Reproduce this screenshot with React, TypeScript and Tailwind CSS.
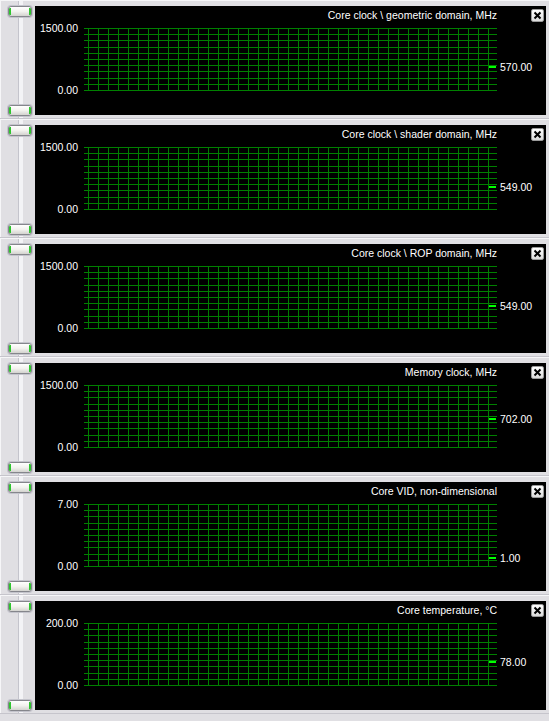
import React from "react";

type Row = { title: string; maxLabel: string; max: number; value: number; valueLabel: string };

const rows: Row[] = [
  { title: "Core clock \\ geometric domain, MHz", maxLabel: "1500.00", max: 1500, value: 570, valueLabel: "570.00" },
  { title: "Core clock \\ shader domain, MHz", maxLabel: "1500.00", max: 1500, value: 549, valueLabel: "549.00" },
  { title: "Core clock \\ ROP domain, MHz", maxLabel: "1500.00", max: 1500, value: 549, valueLabel: "549.00" },
  { title: "Memory clock, MHz", maxLabel: "1500.00", max: 1500, value: 702, valueLabel: "702.00" },
  { title: "Core VID, non-dimensional", maxLabel: "7.00", max: 7, value: 1, valueLabel: "1.00" },
  { title: "Core temperature, °C", maxLabel: "200.00", max: 200, value: 78, valueLabel: "78.00" },
];

const H = 62;
const hLines = Array.from({ length: 11 }, (_, i) => Math.round(i * 6.2) + 0.5);
const vLines = Array.from({ length: 41 }, (_, i) => 4.5 + i * 10);

function Thumb() {
  return (
    <div className="relative ml-[7px] h-[11px] w-[24px] rounded-[3px] border border-[#85868c] bg-linear-to-b from-white via-[#f2f2ee] to-[#d3d3cf] shadow-[0_0_0_1px_#c4c4cc]">
      <div className="absolute left-0 top-[1px] bottom-[1px] w-[2px] rounded-l-[1px] bg-[#2fc42f]" />
      <div className="absolute right-0 top-[1px] bottom-[1px] w-[2px] rounded-r-[1px] bg-[#2fc42f]" />
    </div>
  );
}

function CloseBtn() {
  return (
    <div className="flex h-[13px] w-[13px] items-center justify-center rounded-[2px] border border-[#9a9a9a] bg-linear-to-b from-white to-[#dcdcdc]">
      <svg width="9" height="9" viewBox="0 0 9 9">
        <path d="M1.5 1.5 L7.5 7.5 M7.5 1.5 L1.5 7.5" stroke="#000" strokeWidth="2" />
      </svg>
    </div>
  );
}

function Panel({ r }: { r: Row }) {
  const y = H - (H * r.value) / r.max;
  const ty = Math.round(y);
  return (
    <div className="mt-[5px] mr-[3px] h-[109px] flex-1 bg-black text-[10.5px] leading-none text-white">
      <div className="flex h-[22px] items-start justify-end pt-[3px] pr-[2px]">
        <div className="mr-[34px] flex h-[13px] items-center">
          <span className="whitespace-nowrap">{r.title}</span>
        </div>
        <CloseBtn />
      </div>
      <div className="flex h-[63px]">
        <div className="relative w-[43px]">
          <span className="absolute right-0 top-0 -translate-y-1/2 whitespace-nowrap">{r.maxLabel}</span>
          <span className="absolute right-0 top-[62px] -translate-y-1/2 whitespace-nowrap">0.00</span>
        </div>
        <svg className="ml-[6px] shrink-0" width="413" height="63" shapeRendering="crispEdges">
          {hLines.map((yy) => (
            <line key={"h" + yy} x1="0" x2="413" y1={yy} y2={yy} stroke="#008000" strokeWidth="1" />
          ))}
          {vLines.map((xx) => (
            <line key={"v" + xx} x1={xx} x2={xx} y1="0.5" y2="62.5" stroke="#008000" strokeWidth="1" />
          ))}
          <rect x="405" y={ty - 0.5} width="7" height="2" fill="#00ff00" />
        </svg>
        <div className="relative flex-1">
          <span className="absolute left-[3px] -translate-y-1/2 whitespace-nowrap" style={{ top: ty + 1 }}>
            {r.valueLabel}
          </span>
        </div>
      </div>
    </div>
  );
}

export default function App() {
  return (
    <div className="h-[721px] w-[549px] overflow-hidden bg-[#e0dfe3] font-['Liberation_Sans',Arial,sans-serif]">
      {rows.map((r, i) => (
        <div key={i} className="flex h-[119px] border-t border-b border-t-[#f6f6f8] border-b-[#c6c5cc]">
          <div className="relative w-[35px] shrink-0 border-l border-l-[#f6f6f8]">
            <div className="absolute inset-y-0 left-[17px] w-[5px] border-l border-[#c4c4cc] bg-[#f3f3f6]" />
            <div className="relative flex h-full flex-col justify-between pt-[5px] pb-[2px]">
              <Thumb />
              <Thumb />
            </div>
          </div>
          <Panel r={r} />
        </div>
      ))}
    </div>
  );
}
